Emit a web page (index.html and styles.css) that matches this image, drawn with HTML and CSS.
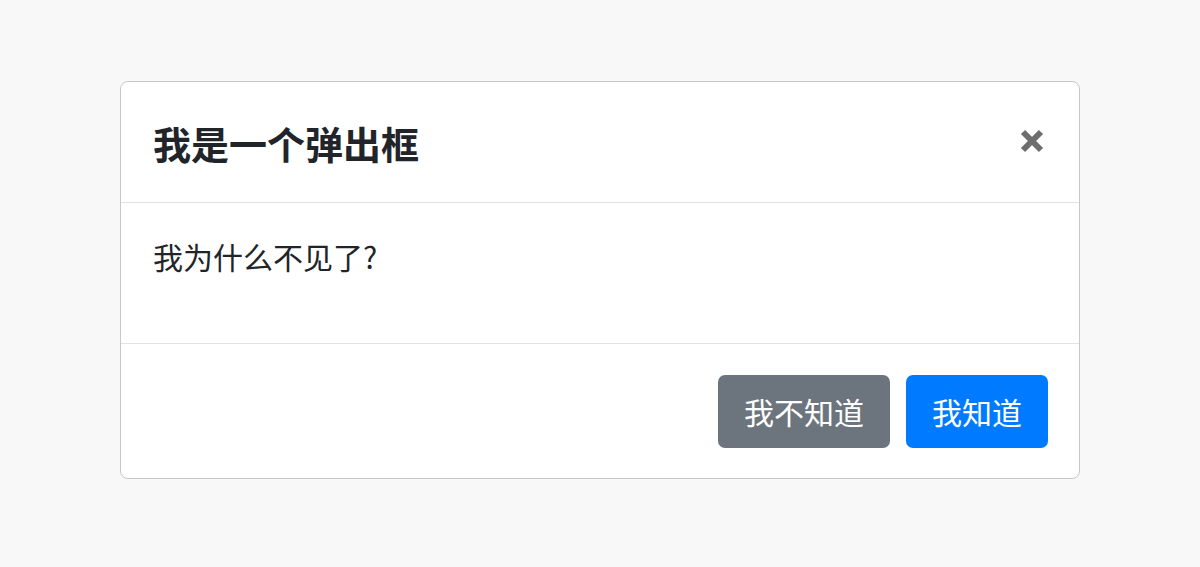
FILE: index.html
```html
<!DOCTYPE html>
<html lang="zh-CN">
<head>
    <meta charset="UTF-8">
    <meta name="viewport" content="width=device-width, initial-scale=1.0">
    <title>弹出框</title>
    <link rel="stylesheet" href="styles.css">
</head>
<body>
    <div class="modal">
        <div class="modal-header">
            <h5 class="modal-title">我是一个弹出框</h5>
            <button class="close" type="button" aria-label="Close">
                <svg width="24" height="24" viewBox="0 0 24 24">
                    <path d="M3 3 L21 21 M21 3 L3 21" stroke="#6e6e6e" stroke-width="6" fill="none"/>
                </svg>
            </button>
        </div>
        <div class="modal-body">
            <p>我为什么不见了?</p>
        </div>
        <div class="modal-footer">
            <button class="btn btn-secondary" type="button">我不知道</button>
            <button class="btn btn-primary" type="button">我知道</button>
        </div>
    </div>
</body>
</html>
```

FILE: styles.css
```css
*{
    padding: 0px;
    margin: 0px;
    box-sizing: border-box;
}
body{
    background-color: #f8f8f8;
    font-family: "Noto Sans CJK SC", "Liberation Sans", sans-serif;
    color: #212529;
}
.modal{
    width: 960px;
    margin: 81px 0 0 120px;
    background-color: #fff;
    border: 1px solid #c8c8c8;
    border-radius: 8px;
}
.modal-header{
    height: 121px;
    display: flex;
    align-items: center;
    justify-content: space-between;
    padding: 0 35px 0 32px;
    border-bottom: 1px solid #e2e2e2;
}
.modal-title{
    font-size: 38px;
    font-weight: 700;
    line-height: 1.5;
}
.close{
    border: 0;
    background: none;
    display: flex;
    padding: 0;
    margin-top: -2px;
}
.modal-body{
    height: 141px;
    padding: 31px 32px;
    border-bottom: 1px solid #e2e2e2;
}
.modal-body p{
    font-size: 30px;
    line-height: 45px;
}
.modal-footer{
    display: flex;
    justify-content: flex-end;
    gap: 16px;
    padding: 31px 31px 30px;
}
.btn{
    height: 73px;
    padding: 0 26px;
    border: 0;
    border-radius: 7px;
    color: #fff;
    font-family: "Noto Sans CJK SC", "Liberation Sans", sans-serif;
    font-size: 30px;
    line-height: 73px;
}
.btn-secondary{
    background-color: #6c757d;
}
.btn-primary{
    background-color: #007bff;
}
```
